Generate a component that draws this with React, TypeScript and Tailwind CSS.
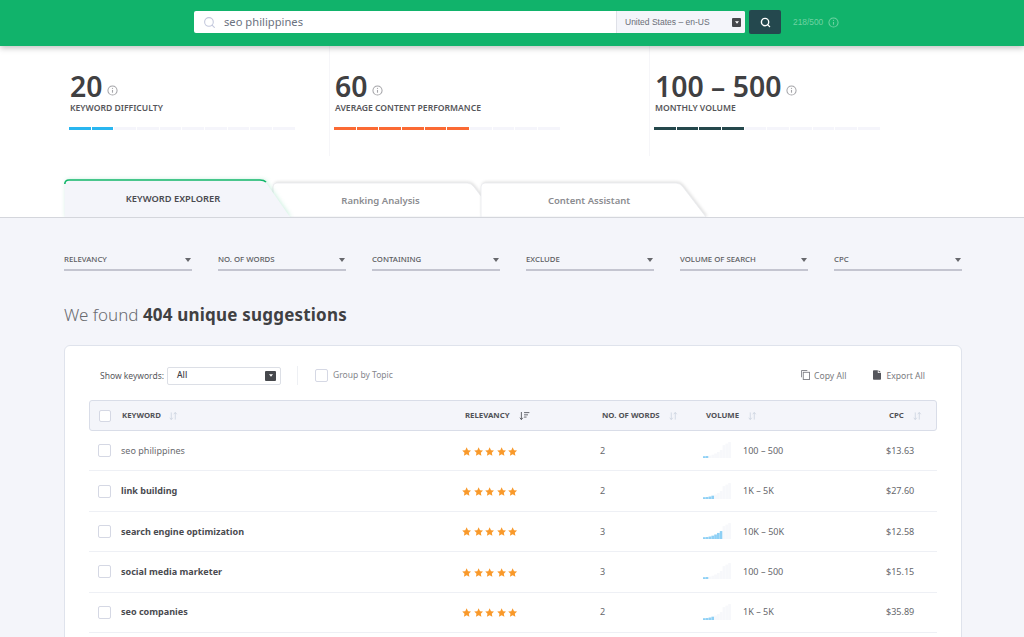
import { Search } from 'lucide-react';

const stats = [
  { value: '20', label: 'Keyword Difficulty', filled: 2, color: 'bg-[#29b6f0]', width: 'w-[329px]', pad: 'pl-[69px]' },
  { value: '60', label: 'Average Content Performance', filled: 6, color: 'bg-[#fb6a34]', width: 'w-[320px]', pad: 'pl-[4px]' },
  { value: '100 – 500', label: 'Monthly Volume', filled: 4, color: 'bg-[#25484c]', width: 'w-[320px]', pad: 'pl-[4px]' },
];

const filters = ['Relevancy', 'No. of words', 'Containing', 'Exclude', 'Volume of search', 'CPC'];

const rows = [
  { keyword: 'seo philippines', bold: false, words: 2, bars: 2, volume: '100 – 500', cpc: '$13.63' },
  { keyword: 'link building', bold: true, words: 2, bars: 4, volume: '1K – 5K', cpc: '$27.60' },
  { keyword: 'search engine optimization', bold: true, words: 3, bars: 7, volume: '10K – 50K', cpc: '$12.58' },
  { keyword: 'social media marketer', bold: true, words: 3, bars: 2, volume: '100 – 500', cpc: '$15.15' },
  { keyword: 'seo companies', bold: true, words: 2, bars: 4, volume: '1K – 5K', cpc: '$35.89' },
];

function InfoIcon({ className }: { className: string }) {
  return (
    <svg viewBox="0 0 12 12" className={className} fill="none" stroke="currentColor">
      <circle cx="6" cy="6" r="5" strokeWidth="1.1" />
      <path d="M6 5.4v3" strokeWidth="1.2" />
      <circle cx="6" cy="3.6" r="0.7" fill="currentColor" stroke="none" />
    </svg>
  );
}

function SortIcon() {
  return (
    <svg viewBox="0 0 10 9" className="w-[9px] h-[8px] text-[#cfd5e0]" fill="none" stroke="currentColor" strokeWidth="1">
      <path d="M2.5 0.5v8M0.8 6.5l1.7 2 1.7-2M7 8.5v-8M5.3 2.5L7 0.5l1.7 2" />
    </svg>
  );
}

function Caret({ className }: { className: string }) {
  return (
    <svg viewBox="0 0 6 4" className={className} fill="currentColor">
      <path d="M0 0h6L3 4z" />
    </svg>
  );
}

function Star() {
  return (
    <svg viewBox="0 0 20 20" className="w-[9.3px] h-[9.3px] text-[#f9992a]" fill="currentColor">
      <path d="M10 0.5l2.9 6.3 6.6.8-4.9 4.6 1.3 6.8L10 15.6l-5.9 3.4 1.3-6.8L0.5 7.6l6.6-.8z" />
    </svg>
  );
}

function VolumeChart({ bars }: { bars: number }) {
  return (
    <svg viewBox="0 0 28 16" className="w-[28px] h-[16px] mb-[1px]">
      {Array.from({ length: 10 }).map((_, i) => {
        const h = i < 7 ? 1.8 + i * i * 0.17 : 2 + i * 1.55;
        return (
          <rect key={i} x={i * 2.8} y={16 - h} width="2.7" height={h} fill={i < bars ? '#8ed0f5' : '#f7f8fb'} />
        );
      })}
    </svg>
  );
}

function Tab({ label, active, className }: { label: string; active?: boolean; className: string }) {
  return (
    <div className={`relative ${className}`}>
      {active ? (
        <svg viewBox="0 0 227 38" className="absolute inset-0 w-full h-full overflow-visible drop-shadow-[1px_0_2px_rgba(18,183,106,0.22)]" preserveAspectRatio="none">
          <path d="M0.5 38V6Q0.5 1 5 1H196Q200 1 203 5L226 38z" fill="#f4f5fa" />
          <path d="M0.8 5Q1 1 5 1H196Q200 1 202 3" fill="none" stroke="#12b76a" strokeWidth="1.6" />
        </svg>
      ) : (
        <svg viewBox="0 0 227 35" className="absolute inset-0 w-full h-full overflow-visible drop-shadow-[1px_-0.5px_1.5px_rgba(0,0,0,0.12)]" preserveAspectRatio="none">
          <path d="M1 35V5Q1 1 5 1H196Q200 1 203 5L226 35z" fill="#ffffff" stroke="#e9eaed" strokeWidth="0.8" />
        </svg>
      )}
      <span
        className={`relative block text-center font-semibold ${
          active
            ? 'text-[9.3px] uppercase text-[#4a4a50] pt-[13px] pr-[9px]'
            : 'text-[9.5px] text-[#8b8c90] pt-[12px] pr-[9px]'
        }`}
      >
        {label}
      </span>
    </div>
  );
}

export default function App() {
  return (
    <div className="w-[1024px] h-[637px] overflow-hidden bg-white font-['Noto_Sans',sans-serif]">
      <header className="relative z-10 h-[46px] bg-[#11b36b] shadow-[0_2px_6px_rgba(0,0,0,0.25)] flex items-center pl-[194px] pb-[2px]">
        <div className="w-[551px] h-[22px] bg-white rounded-[2px] flex items-center overflow-hidden">
          <Search className="w-[13px] h-[13px] ml-[9px] text-[#c3c8dc]" strokeWidth={2} />
          <span className="ml-[8px] text-[11.2px] text-[#6b7280] flex-1">seo philippines</span>
          <div className="w-[129px] h-full bg-[#f4f5fa] border-l border-[#dfe1e8] flex items-center justify-between pl-[8px] pr-[4px]">
            <span className="font-['Liberation_Sans',sans-serif] text-[8.5px] text-[#6a6e78]">United States – en-US</span>
            <span className="w-[9px] h-[9px] rounded-[1px] bg-[#46484c] flex items-center justify-center">
              <Caret className="w-[4px] h-[3px] text-white" />
            </span>
          </div>
        </div>
        <button className="ml-[4px] w-[32px] h-[24px] rounded-[2px] bg-[#24484e] flex items-center justify-center">
          <Search className="w-[11px] h-[11px] text-white" strokeWidth={3} />
        </button>
        <span className="ml-[12px] font-['Liberation_Sans',sans-serif] text-[8.4px] text-[#6fd2a2]">218/500</span>
        <InfoIcon className="ml-[5px] w-[11px] h-[11px] text-[#6fd2a2]" />
      </header>

      <section className="flex h-[133px]">
        {stats.map((s, idx) => (
          <div
            key={s.label}
            className={`${s.width} ${s.pad} ${idx > 0 ? 'border-l border-[#f6f6f9]' : ''} h-[110px] pt-[22px]`}
          >
            <div className="flex items-center pl-[1px] h-[36px]">
              <span className="text-[28.4px] leading-none font-semibold text-[#404042]">{s.value}</span>
              <InfoIcon className="ml-[5px] mt-[9px] w-[11px] h-[11px] text-[#a4a4a8]" />
            </div>
            <div className="pl-[1px] text-[8.6px] leading-[12px] font-semibold uppercase text-[#56565a] mt-[-2px]">{s.label}</div>
            <div className="flex gap-[1px] mt-[13px]">
              {Array.from({ length: 10 }).map((_, i) => (
                <span key={i} className={`w-[21.67px] h-[3px] ${i < s.filled ? s.color : 'bg-[#f5f5fb]'}`} />
              ))}
            </div>
          </div>
        ))}
      </section>

      <nav className="flex items-end pl-[64px] h-[38px]">
        <Tab label="Keyword Explorer" active className="w-[227px] h-[38px] z-10" />
        <Tab label="Ranking Analysis" className="w-[226px] h-[35px] -ml-[19px]" />
        <Tab label="Content Assistant" className="w-[227px] h-[35px] -ml-[18px]" />
      </nav>

      <main className="relative z-20 bg-[#f4f5fa] border-t border-[#d4d6dc] pl-[64px] pr-[62px] h-[420px]">
        <div className="flex gap-[26px] pt-[33px]">
          {filters.map((f) => (
            <div key={f} className="w-[128px] h-[20px] border-b-2 border-[#c4c5d0] flex items-center justify-between pr-[1px]">
              <span className="text-[7.8px] font-medium uppercase text-[#5c5d62]">{f}</span>
              <Caret className="w-[6px] h-[4px] text-[#66676c]" />
            </div>
          ))}
        </div>

        <h2 className="mt-[32px] text-[17px] leading-[24px] font-light text-[#6a6b70]">
          We found <span className="font-bold tracking-[0.2px] text-[#404042]">404 unique suggestions</span>
        </h2>

        <div className="mt-[18px] bg-white border border-[#dfe3ec] rounded-[6px] px-[24px] h-[300px]">
          <div className="flex items-center h-[54px] pt-[5px]">
            <span className="ml-[11px] mt-[2px] text-[8.5px] text-[#58595e]">Show keywords:</span>
            <div className="ml-[3px] w-[114px] h-[18px] border border-[#dcdfe6] rounded-[2px] flex items-center justify-between pl-[9px] pr-[4px]">
              <span className="text-[8.5px] font-medium text-[#404046]">All</span>
              <span className="w-[11px] h-[10px] rounded-[1px] bg-[#46484c] flex items-center justify-center">
                <Caret className="w-[4px] h-[3px] text-white" />
              </span>
            </div>
            <span className="ml-[16px] w-px h-[19px] bg-[#eef0f4]" />
            <span className="block ml-[17px] w-[13px] h-[13px] rounded-[2px] border border-[#d5d8e4] bg-white shrink-0" />
            <span className="ml-[5px] text-[8.5px] text-[#85868c]">Group by Topic</span>
            <div className="ml-auto flex items-center mt-[2px] text-[8.6px] text-[#7a7b80] pr-[12px]">
              <svg viewBox="0 0 10 11" className="-mt-[3px] w-[9px] h-[10px] text-[#7d7e84]" fill="none" stroke="currentColor" strokeWidth="1">
                <path d="M0.5 8V0.5H7" />
                <rect x="2.5" y="2.5" width="7" height="8" />
              </svg>
              <span className="ml-[4px]">Copy All</span>
              <svg viewBox="0 0 10 12" className="-mt-[3px] ml-[27px] w-[8px] h-[10px] text-[#55565c]" fill="currentColor">
                <path d="M0 1a1 1 0 0 1 1-1h5v3.5h4V11a1 1 0 0 1-1 1H1a1 1 0 0 1-1-1zM7 0l3 2.6H7z" />
              </svg>
              <span className="ml-[5px]">Export All</span>
            </div>
          </div>

          <div className="grid grid-cols-[373px_138px_103px_183px_1fr] items-center h-[31px] pt-[1px] bg-[#f4f5fa] border border-[#d9dde8] rounded-[3px] text-[7.8px] font-bold uppercase text-[#505156]">
            <div className="flex items-center pl-[9px]">
              <span className="block w-[12px] h-[12px] rounded-[2px] border border-[#d5d8e4] bg-white shrink-0" />
              <span className="ml-[11px]">Keyword</span>
              <span className="ml-[8px]"><SortIcon /></span>
            </div>
            <div className="flex items-center pl-[2px]">
              Relevancy
              <svg viewBox="0 0 12 9" className="ml-[9px] w-[11px] h-[8px] text-[#55565c]" fill="none" stroke="currentColor" strokeWidth="1">
                <path d="M2.5 0v8.5M0.8 6.5l1.7 2 1.7-2M5.5 0.7h6M5.5 3.2h4.4M5.5 5.7h2.8" />
              </svg>
            </div>
            <div className="flex items-center pl-[1px]">
              No. of words
              <span className="ml-[9px]"><SortIcon /></span>
            </div>
            <div className="flex items-center pl-[2px]">
              Volume
              <span className="ml-[9px]"><SortIcon /></span>
            </div>
            <div className="flex items-center pl-[2px]">
              CPC
              <span className="ml-[9px]"><SortIcon /></span>
            </div>
          </div>

          {rows.map((r) => (
            <div key={r.keyword} className="grid grid-cols-[373px_138px_103px_183px_1fr] items-center h-[40.4px] border-b border-[#eef0f5] text-[9.05px] text-[#66676c]">
              <div className="flex items-center pl-[9px]">
                <span className="block w-[13px] h-[13px] rounded-[2px] border border-[#d5d8e4] bg-white shrink-0" />
                <span className={`ml-[10px] ${r.bold ? 'font-bold text-[#4a4b50]' : 'text-[#6a6b70]'}`}>{r.keyword}</span>
              </div>
              <div className="flex gap-[2.3px] pt-[1px]">
                <Star /><Star /><Star /><Star /><Star />
              </div>
              <div>{r.words}</div>
              <div className="flex items-center">
                <VolumeChart bars={r.bars} />
                <span className="ml-[12px]">{r.volume}</span>
              </div>
              <div>{r.cpc}</div>
            </div>
          ))}
        </div>
      </main>
    </div>
  );
}
